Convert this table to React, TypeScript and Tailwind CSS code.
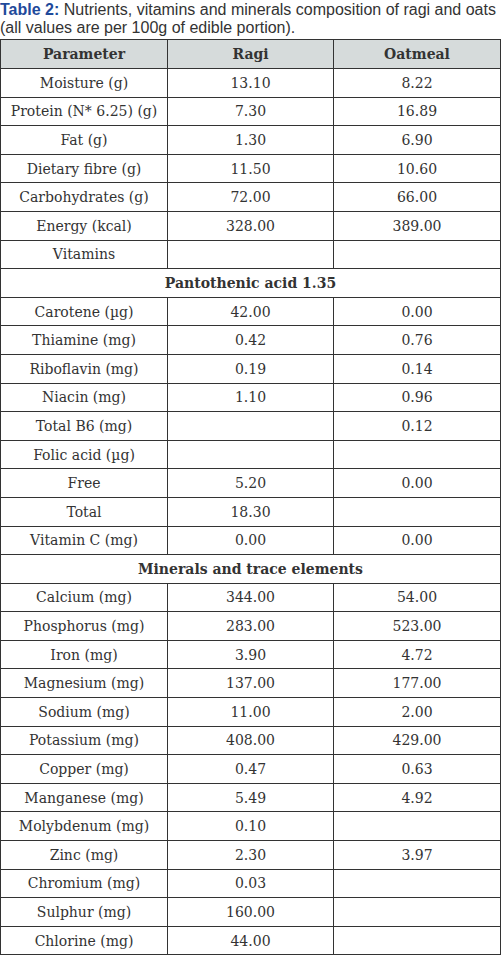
type Row = { label: string; ragi?: string; oat?: string; span?: boolean };

const rows: Row[] = [
  { label: "Moisture (g)", ragi: "13.10", oat: "8.22" },
  { label: "Protein (N* 6.25) (g)", ragi: "7.30", oat: "16.89" },
  { label: "Fat (g)", ragi: "1.30", oat: "6.90" },
  { label: "Dietary fibre (g)", ragi: "11.50", oat: "10.60" },
  { label: "Carbohydrates (g)", ragi: "72.00", oat: "66.00" },
  { label: "Energy (kcal)", ragi: "328.00", oat: "389.00" },
  { label: "Vitamins" },
  { label: "Pantothenic acid 1.35", span: true },
  { label: "Carotene (µg)", ragi: "42.00", oat: "0.00" },
  { label: "Thiamine (mg)", ragi: "0.42", oat: "0.76" },
  { label: "Riboflavin (mg)", ragi: "0.19", oat: "0.14" },
  { label: "Niacin (mg)", ragi: "1.10", oat: "0.96" },
  { label: "Total B6 (mg)", oat: "0.12" },
  { label: "Folic acid (µg)" },
  { label: "Free", ragi: "5.20", oat: "0.00" },
  { label: "Total", ragi: "18.30" },
  { label: "Vitamin C (mg)", ragi: "0.00", oat: "0.00" },
  { label: "Minerals and trace elements", span: true },
  { label: "Calcium (mg)", ragi: "344.00", oat: "54.00" },
  { label: "Phosphorus (mg)", ragi: "283.00", oat: "523.00" },
  { label: "Iron (mg)", ragi: "3.90", oat: "4.72" },
  { label: "Magnesium (mg)", ragi: "137.00", oat: "177.00" },
  { label: "Sodium (mg)", ragi: "11.00", oat: "2.00" },
  { label: "Potassium (mg)", ragi: "408.00", oat: "429.00" },
  { label: "Copper (mg)", ragi: "0.47", oat: "0.63" },
  { label: "Manganese (mg)", ragi: "5.49", oat: "4.92" },
  { label: "Molybdenum (mg)", ragi: "0.10" },
  { label: "Zinc (mg)", ragi: "2.30", oat: "3.97" },
  { label: "Chromium (mg)", ragi: "0.03" },
  { label: "Sulphur (mg)", ragi: "160.00" },
  { label: "Chlorine (mg)", ragi: "44.00" },
];

const cell = "border border-[#333] text-center align-middle p-0 leading-[16px]";

const App = () => {
  return (
    <div className="w-[501px] bg-white">
      <p className="text-[16px] leading-[18px] text-[#333] pt-[1px] font-['Liberation_Sans',Arial,sans-serif]">
        <span className="font-bold text-[#1f4a9b]">Table 2:</span> Nutrients, vitamins and minerals composition of ragi and oats (all values are per 100g of edible portion).
      </p>
      <table className="mt-[2px] w-[501px] border-collapse table-fixed text-[14px] text-[#333] font-['DejaVu_Serif',serif]">
        <thead>
          <tr className="h-[29px] bg-[#d6dbdb] font-bold">
            <th className={`${cell} w-[167px]`}>Parameter</th>
            <th className={`${cell} w-[166px]`}>Ragi</th>
            <th className={cell}>Oatmeal</th>
          </tr>
        </thead>
        <tbody>
          {rows.map((row, key) =>
            row.span ? (
              <tr key={key} className="h-[28.6px]">
                <td colSpan={3} className={`${cell} font-bold`}>
                  {row.label}
                </td>
              </tr>
            ) : (
              <tr key={key} className="h-[28.6px]">
                <td className={cell}>{row.label}</td>
                <td className={cell}>{row.ragi}</td>
                <td className={cell}>{row.oat}</td>
              </tr>
            )
          )}
        </tbody>
      </table>
    </div>
  );
};

export default App;
